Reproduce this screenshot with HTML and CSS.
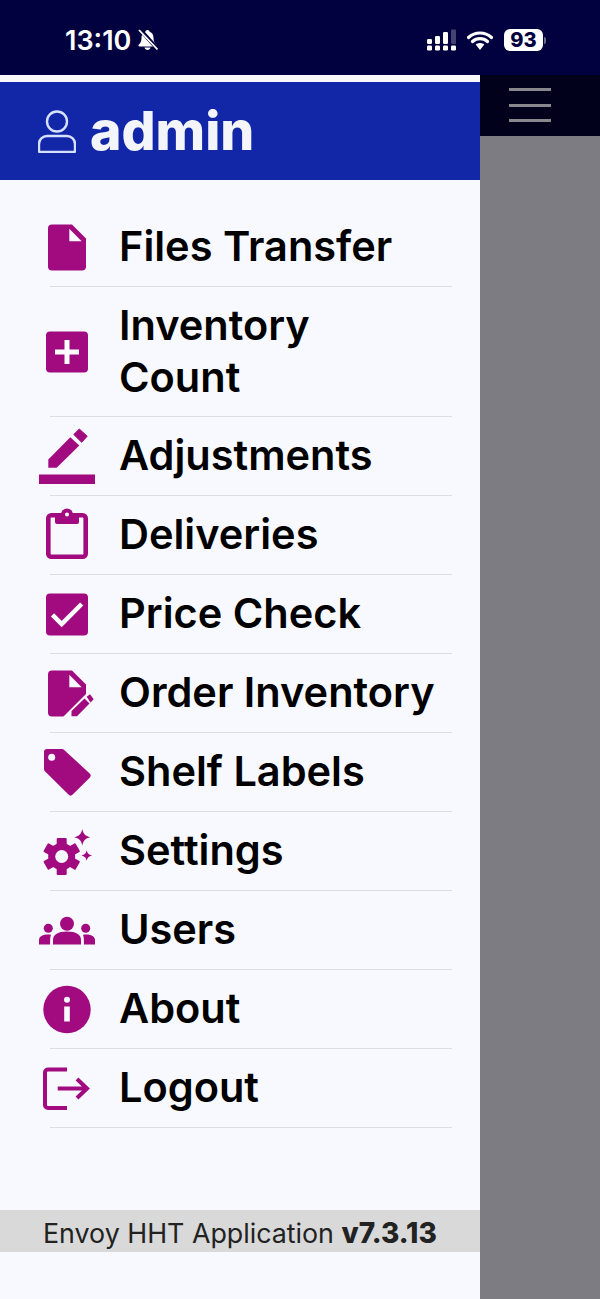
FILE: index.html
```html
<!DOCTYPE html>
<html lang="en">
<head>
    <meta charset="UTF-8">
    <meta name="viewport" content="width=device-width, initial-scale=1.0">
    <title>Envoy HHT Application</title>
    <link rel="stylesheet" href="styles.css">
</head>
<body>
    <div class="status">
        <span class="time">13:10</span>
        <svg class="bell" viewBox="0 0 21 22" width="21" height="22">
            <path d="M10.5 1c-1.3 0-2 .8-2.100 1.800C5.600 3.700 4.500 6 4.500 9c0 3.500-1 5-2.800 6.800-.7.700-.2 1.700.7 1.700h16.200c.9 0 1.400-1 .7-1.700C17.500 14 16.500 12.500 16.500 9c0-3-1.100-5.300-3.900-6.200C12.500 1.800 11.800 1 10.500 1z" fill="#fff"/>
            <path d="M7.500 18.500c.3 1.500 1.500 2.500 3 2.500s2.700-1 3-2.500z" fill="#fff"/>
            <path d="M3 .5L20.500 20" stroke="#02013f" stroke-width="4"/>
            <path d="M2 1L20.500 20.500" stroke="#fff" stroke-width="1.800"/>
        </svg>
        <span class="status-right">
            <svg viewBox="0 0 30 22" width="30" height="22">
                <g fill="#fff">
                    <rect x="0" y="10" width="5" height="5" rx="1.200"/><rect x="0" y="16.500" width="5" height="5" rx="1.200"/>
                    <rect x="8" y="7" width="5" height="8" rx="1.200"/><rect x="8" y="16.500" width="5" height="5" rx="1.200"/>
                    <rect x="16" y="3" width="5" height="12" rx="1.200"/><rect x="16" y="16.500" width="5" height="5" rx="1.200"/>
                    <rect x="24" y="16.500" width="5" height="5" rx="1.200"/>
                </g>
                <rect x="24" y="0.500" width="5" height="14.500" rx="1" fill="#45436f"/>
            </svg>
            <svg class="wifi" viewBox="0 0 26 19" width="26" height="19">
                <path d="M1.500 6.500C8 .500 18 .500 24.500 6.500M5.500 10.500C9.800 6.700 16.200 6.700 20.500 10.500" fill="none" stroke="#fff" stroke-width="3.200" stroke-linecap="round"/>
                <path d="M8.700 13.500c2.500-2 6.100-2 8.600 0L13 19z" fill="#fff"/>
            </svg>
            <span class="battery">93</span>
            <span class="nub"></span>
        </span>
    </div>
    <div class="main">
        <div class="drawer">
            <div class="drawer-head">
                <svg viewBox="0 0 38 44" width="38" height="44">
                    <circle cx="19" cy="12.500" r="10" fill="none" stroke="#d5e1ff" stroke-width="2.400"/>
                    <path d="M9 27h20a8 8 0 0 1 8 8v7a1 1 0 0 1-1 1H2a1 1 0 0 1-1-1v-7a8 8 0 0 1 8-8z" fill="none" stroke="#d5e1ff" stroke-width="2.400"/>
                </svg>
                <span class="username">admin</span>
            </div>
            <ul class="menu">
                <li>
                    <a class="row">
                        <svg viewBox="0 0 56 56" class="ico"><path d="M13 5.500h20l14 14v28a4 4 0 0 1-4 4H13a4 4 0 0 1-4-4v-38a4 4 0 0 1 4-4z" fill="#a20a80"/><path d="M30.300 9.800l12.400 12.400H30.300z" fill="#f7f9fe"/></svg>
                        <span class="label">Files Transfer</span>
                    </a>
                    <hr>
                </li>
                <li>
                    <a class="row">
                        <svg viewBox="0 0 56 56" class="ico"><rect x="7" y="7.500" width="42" height="41" rx="4" fill="#a20a80"/><path d="M16 28h24M28 16v24" stroke="#fff" stroke-width="5"/></svg>
                        <span class="label">Inventory<br>Count</span>
                    </a>
                    <hr>
                </li>
                <li>
                    <a class="row">
                        <svg viewBox="0 0 56 56" class="ico"><path d="M9.300 31.500 31.300 9.200 40.300 17.500 17.700 39.800H9.300z" fill="#a20a80"/><path d="M34.800 6.500 40.300 1 48.200 8.200 42.700 14.300z" fill="#a20a80" stroke="#a20a80" stroke-linejoin="round"/><rect x="0" y="46.500" width="56" height="9.500" fill="#a20a80"/></svg>
                        <span class="label">Adjustments</span>
                    </a>
                    <hr>
                </li>
                <li>
                    <a class="row">
                        <svg viewBox="0 0 56 56" class="ico"><rect x="9.300" y="8.300" width="37.400" height="41.400" rx="3" fill="none" stroke="#a20a80" stroke-width="4.600"/><path d="M16 6h24v9a2 2 0 0 1-2 2H18a2 2 0 0 1-2-2z" fill="#a20a80"/><circle cx="28" cy="7.500" r="6" fill="#a20a80"/><circle cx="28" cy="7.500" r="2" fill="#f7f9fe"/></svg>
                        <span class="label">Deliveries</span>
                    </a>
                    <hr>
                </li>
                <li>
                    <a class="row">
                        <svg viewBox="0 0 56 56" class="ico"><rect x="7" y="7.500" width="42" height="42" rx="4" fill="#a20a80"/><path d="M13.500 28.800 22.700 38 42.700 18" fill="none" stroke="#fff" stroke-width="4.500"/></svg>
                        <span class="label">Price Check</span>
                    </a>
                    <hr>
                </li>
                <li>
                    <a class="row">
                        <svg viewBox="0 0 56 56" class="ico">
                            <path d="M13 5.500h20l14 14v28a4 4 0 0 1-4 4H13a4 4 0 0 1-4-4v-38a4 4 0 0 1 4-4z" fill="#a20a80"/>
                            <path d="M30.300 9.800l12.400 12.400H30.300z" fill="#f7f9fe"/>
                            <path d="M24.500 51.500 47.500 28.500V56H24.500z" fill="#f7f9fe"/>
                            <path d="M32.500 51.200v-5.200L45.500 33.500 50.500 38.500 38 51.200z" fill="#a20a80"/>
                            <path d="M47.700 31.800l3.300-2.600 3.700 5-3.200 3.300z" fill="#a20a80"/>
                        </svg>
                        <span class="label">Order Inventory</span>
                    </a>
                    <hr>
                </li>
                <li>
                    <a class="row">
                        <svg viewBox="0 0 56 56" class="ico"><path d="M8 5h15a3 3 0 0 1 2.200.9L50.700 29.500a3 3 0 0 1 0 4.200L33.700 50.600a3 3 0 0 1-4.200 0L5.900 27.200A3 3 0 0 1 5 25V8a3 3 0 0 1 3-3z" fill="#a20a80"/><circle cx="12.700" cy="13.200" r="3.500" fill="#f7f9fe"/></svg>
                        <span class="label">Shelf Labels</span>
                    </a>
                    <hr>
                </li>
                <li>
                    <a class="row">
                        <svg viewBox="0 0 56 56" class="ico">
                            <g fill="#a20a80" transform="translate(22.700 33.500)">
                                <circle r="13.500"/>
                                <rect x="-5" y="-18.500" width="10" height="37" rx="1"/>
                                <rect x="-5" y="-18.500" width="10" height="37" rx="1" transform="rotate(60)"/>
                                <rect x="-5" y="-18.500" width="10" height="37" rx="1" transform="rotate(120)"/>
                            </g>
                            <circle cx="22.700" cy="33.500" r="6.500" fill="#f7f9fe"/>
                            <path d="M43.300 6c1 5 3 7 8 8.200-5 1.200-7 3.200-8 8.200-1-5-3-7-8-8.200 5-1.200 7-3.200 8-8.200z" fill="#a20a80"/>
                            <path d="M47.700 27.200c.6 3 2 4.500 5.300 5.300-3.300.8-4.700 2.300-5.300 5.300-.6-3-2-4.500-5.300-5.300 3.300-.8 4.700-2.300 5.300-5.300z" fill="#a20a80"/>
                        </svg>
                        <span class="label">Settings</span>
                    </a>
                    <hr>
                </li>
                <li>
                    <a class="row">
                        <svg viewBox="0 0 56 56" class="ico">
                            <circle cx="28" cy="21.800" r="7" fill="#a20a80"/>
                            <circle cx="9.300" cy="26.200" r="4.500" fill="#a20a80"/>
                            <circle cx="46.700" cy="26.200" r="4.500" fill="#a20a80"/>
                            <path d="M14 42.500V38c0-5.500 5-8.500 14-8.500S42 32.500 42 38v4.500z" fill="#a20a80"/>
                            <path d="M0 42.500V38c0-3 2.500-5.500 9-5.500 1 0 2 .1 3 .3-.6 1.500-.9 3.200-.9 5.200v4.500zM56 42.500V38c0-3-2.500-5.500-9-5.500-1 0-2 .1-3 .3.600 1.500.9 3.200.9 5.200v4.500z" fill="#a20a80"/>
                        </svg>
                        <span class="label">Users</span>
                    </a>
                    <hr>
                </li>
                <li>
                    <a class="row">
                        <svg viewBox="0 0 56 56" class="ico"><circle cx="28" cy="28.500" r="23.700" fill="#a20a80"/><rect x="25.200" y="25.500" width="5.600" height="15" fill="#f7f9fe"/><circle cx="28" cy="18.800" r="3" fill="#f7f9fe"/></svg>
                        <span class="label">About</span>
                    </a>
                    <hr>
                </li>
                <li>
                    <a class="row">
                        <svg viewBox="0 0 56 56" class="ico"><path d="M28 9.500H9a3 3 0 0 0-3 3V45a3 3 0 0 0 3 3h19" fill="none" stroke="#a20a80" stroke-width="4"/><path d="M18.700 28.500H47M38 19l10 9.500L38 38" fill="none" stroke="#a20a80" stroke-width="4"/></svg>
                        <span class="label">Logout</span>
                    </a>
                    <hr>
                </li>
            </ul>
            <div class="version">Envoy HHT Application <b>v7.3.13</b></div>
        </div>
        <div class="side">
            <div class="navbar">
                <span class="line"></span>
                <span class="line"></span>
                <span class="line"></span>
            </div>
        </div>
    </div>
</body>
</html>
```

FILE: styles.css
```css
* {
    box-sizing: border-box;
}
html, body {
    margin: 0;
    height: 1299px;
    overflow: hidden;
}
body {
    font-family: Inter, 'Liberation Sans', sans-serif;
    display: flex;
    flex-direction: column;
    background: #7d7c82;
}
.status {
    height: 75px;
    flex: none;
    background: #02013f;
    color: #fff;
    display: flex;
    align-items: center;
    padding: 5px 54px 0 65px;
}
.time {
    font-size: 27px;
    font-weight: 600;
}
.bell {
    margin-left: 6px;
}
.status-right {
    margin-left: auto;
    display: flex;
    align-items: center;
}
.wifi {
    margin-left: 10px;
}
.battery {
    margin-left: 11px;
    width: 39px;
    height: 22px;
    border-radius: 6px;
    background: #fff;
    color: #02013f;
    font-size: 20px;
    font-weight: 800;
    line-height: 22px;
    text-align: center;
}
.nub {
    width: 2px;
    height: 7px;
    margin-left: 1px;
    border-radius: 0 2px 2px 0;
    background: #6b6a8c;
}
.main {
    flex: 1;
    display: flex;
}
.drawer {
    width: 480px;
    flex: none;
    padding-top: 7px;
    background: #f7f9fe;
    display: flex;
    flex-direction: column;
}
.drawer-head {
    height: 98px;
    flex: none;
    background: #1226a8;
    display: flex;
    align-items: center;
    padding-left: 38px;
    gap: 14px;
}
.username {
    color: #f3f5fa;
    font-size: 53.5px;
    font-weight: 800;
    line-height: 1;
}
.menu {
    list-style: none;
    margin: 0;
    padding: 28px 0 0;
}
.row {
    display: flex;
    align-items: center;
    gap: 24px;
    padding-left: 39px;
    min-height: 78px;
    color: #000;
    font-size: 41.5px;
    font-weight: 600;
    line-height: 52px;
}
.label {
    padding: 11.5px 0 13.5px;
}
.ico {
    width: 56px;
    height: 56px;
    flex: none;
}
.menu hr {
    height: 1px;
    margin: 0 28px 0 50px;
    border: 0;
    background: #dcdde2;
}
.version {
    margin-top: 82px;
    height: 42px;
    flex: none;
    background: #d9d9d9;
    color: #222;
    font-size: 26.8px;
    line-height: 46px;
    padding-left: 43px;
    white-space: nowrap;
}
.version b {
    font-size: 28px;
    font-weight: 800;
}
.side {
    flex: 1;
}
.navbar {
    height: 61px;
    background: #02011c;
    display: flex;
    flex-direction: column;
    align-items: center;
    gap: 12.5px;
    padding: 13px 20px 0 0;
}
.line {
    width: 42px;
    height: 3px;
    background: #87878d;
}
```
